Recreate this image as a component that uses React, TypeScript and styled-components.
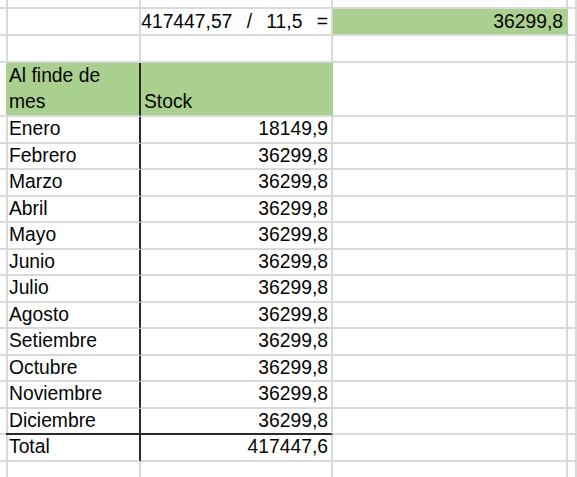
import React from 'react'
import styled, { createGlobalStyle } from 'styled-components'

const GRID = '#d9d9d9'
const DARK = '#2a2a2a'
const GREEN = '#a9d08e'

const GlobalStyle = createGlobalStyle`
	html, body {
		margin: 0;
		padding: 0;
		background: #ffffff;
	}
	body {
		font-family: 'Liberation Sans', Arial, sans-serif;
		color: #050505;
		overflow: hidden;
	}
`

type CellProps = {
	$right?: boolean
	$fill?: string
	$darkRight?: boolean
	$darkBottom?: boolean
	$wrap?: boolean
}

const Sheet = styled.div`
	width: 577px;
	height: 477px;
	overflow: hidden;
`

const Row = styled.div<{ $h: number }>`
	display: grid;
	grid-template-columns: 6px 135px 192px 235px 1fr;
	height: ${(p) => p.$h}px;
`

const Cell = styled.div<CellProps>`
	box-sizing: border-box;
	display: flex;
	align-items: flex-end;
	justify-content: ${(p) => (p.$right ? 'flex-end' : 'flex-start')};
	padding: 0 3px;
	font-size: 19.3px;
	line-height: ${(p) => (p.$wrap ? '26px' : '24.5px')};
	white-space: ${(p) => (p.$wrap ? 'normal' : 'pre')};
	background: ${(p) => p.$fill ?? 'transparent'};
	border-right: 2px solid ${(p) => (p.$darkRight ? DARK : p.$fill ?? GRID)};
	border-bottom: 2px solid ${(p) => (p.$darkBottom ? DARK : GRID)};
`

const Formula = styled.span`
	word-spacing: 1.8px;
`

const months: Array<[string, string]> = [
	['Enero', '18149,9'],
	['Febrero', '36299,8'],
	['Marzo', '36299,8'],
	['Abril', '36299,8'],
	['Mayo', '36299,8'],
	['Junio', '36299,8'],
	['Julio', '36299,8'],
	['Agosto', '36299,8'],
	['Setiembre', '36299,8'],
	['Octubre', '36299,8'],
	['Noviembre', '36299,8'],
	['Diciembre', '36299,8']
]

const EmptyRow = ({ h }: { h: number }) => (
	<Row $h={h}>
		<Cell />
		<Cell />
		<Cell />
		<Cell />
		<Cell />
	</Row>
)

const App = () => {
	return (
		<>
			<GlobalStyle />
			<Sheet>
				<EmptyRow h={9} />
				<Row $h={27}>
					<Cell />
					<Cell />
					<Cell $right>
						<Formula>417447,57  /  11,5  =</Formula>
					</Cell>
					<Cell $right $fill={GREEN}>
						36299,8
					</Cell>
					<Cell />
				</Row>
				<EmptyRow h={27} />
				<Row $h={54}>
					<Cell />
					<Cell $fill={GREEN} $darkRight $wrap>
						Al finde de mes
					</Cell>
					<Cell $fill={GREEN} $wrap>
						Stock
					</Cell>
					<Cell />
					<Cell />
				</Row>
				{months.map(([name, value], i) => {
					const last = i === months.length - 1
					return (
						<Row $h={26.5} key={name}>
							<Cell />
							<Cell $darkRight $darkBottom={last}>
								{name}
							</Cell>
							<Cell $right $darkBottom={last}>
								{value}
							</Cell>
							<Cell />
							<Cell />
						</Row>
					)
				})}
				<Row $h={26.5}>
					<Cell />
					<Cell $darkRight>Total</Cell>
					<Cell $right>417447,6</Cell>
					<Cell />
					<Cell />
				</Row>
				<EmptyRow h={26.5} />
			</Sheet>
		</>
	)
}

export default App
